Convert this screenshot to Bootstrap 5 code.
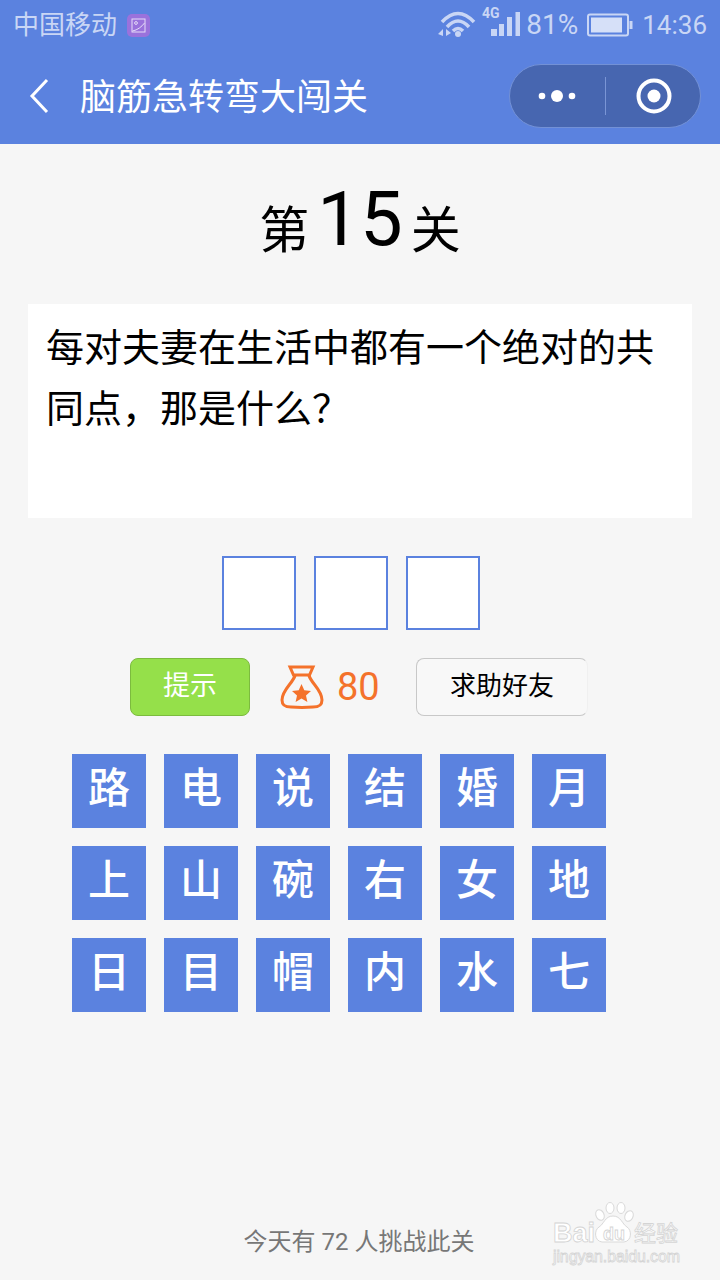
<!DOCTYPE html>
<html lang="zh-CN">
<head>
    <meta charset="UTF-8">
    <meta name="viewport" content="width=device-width, initial-scale=1.0">
    <title>脑筋急转弯大闯关</title>
    <link href="https://cdn.jsdelivr.net/npm/bootstrap@5.3.0/dist/css/bootstrap.min.css" rel="stylesheet">
    <style>
        html, body { height: 1280px; overflow: hidden; }
        body { background: #f6f6f6; font-family: Roboto, "Noto Sans CJK SC", sans-serif; color: #000; width: 720px; }
        .app-head { background: #5b82df; height: 144px; }
        .status-row { height: 48px; padding: 2px 13px 0 13px; color: #c9d6f5; font-size: 26px; line-height: 46px; }
        .sim-badge { width: 23px; height: 23px; background: #9a72dc; border-radius: 5px; margin-left: 10px; }
        .batt-pct { font-size: 28px; margin-left: 5px; }
        .gap-5 { margin-left: 5px; }
        .gap-9 { margin-left: 9px; }
        .nav-row { height: 96px; padding: 0 19px 0 29px; }
        .nav-title { color: #fff; font-size: 36px; margin-left: 24px; line-height: 1; padding-top: 4px; }
        .capsule { width: 192px; height: 64px; border-radius: 32px; background: #4766b0; border: 1px solid #7391d6; }
        .capsule-part { width: 95px; }
        .capsule-part-right { padding-left: 3px; }
        .capsule-line { width: 1px; height: 38px; background: #7a95d5; }
        .level-title { height: 160px; padding-top: 29px; font-size: 50px; }
        .level-num { font-size: 76px; line-height: 92px; margin: 0 8px; }
        .level-word { line-height: 92px; padding-top: 12px; }
        .question-box { width: 664px; height: 214px; margin-left: 28px; background: #fff; padding: 14px 18px; font-size: 38px; line-height: 61px; }
        .answer-row { margin: 38px 0 0 222px; gap: 18px; }
        .answer-cell { width: 74px; height: 74px; border: 2px solid #5b82df; background: #fff; }
        .tool-row { margin-top: 28px; margin-left: 130px; height: 58px; }
        .hint-btn { width: 120px; height: 58px; background: #95e04a; border: 1px solid #7cbb3e; border-radius: 8px; color: #fff; font-size: 27px; padding: 0 0 1px; }
        .hint-btn:hover { background: #95e04a; color: #fff; border-color: #7cbb3e; }
        .coin-wrap { width: 166px; padding-left: 30px; color: #f4722b; font-size: 38px; gap: 13px; }
        .help-btn { width: 172px; height: 58px; background: #f8f8f8; border: 1px solid #c8c8c8; border-right-color: #f0f0f0; border-radius: 8px; color: #000; font-size: 26px; padding: 0 0 2px; }
        .letter-grid { margin: 38px 0 0 72px; display: grid; grid-template-columns: repeat(6, 74px); gap: 18px; }
        .letter-cell { height: 74px; background: #5b82df; color: #fff; font-size: 42px; font-weight: 500; line-height: 1; padding-bottom: 4px; }
        .foot-text { position: absolute; left: 0; right: 2px; top: 1224px; text-align: center; color: #777; font-size: 24px; line-height: 36px; }
        .mark-logo { position: absolute; left: 550px; top: 1200px; }
        .mark-logo text { fill: #fff; stroke: #d4d4d4; stroke-width: .8px; }
        .mark-brand { font-family: "Liberation Sans", sans-serif; font-weight: 700; font-size: 27px; }
        .mark-du { font-family: "Liberation Sans", sans-serif; font-weight: 700; font-size: 18px; }
        .mark-jy { font-size: 22px; }
        .mark-url { font-family: "Liberation Sans", sans-serif; font-size: 16px; }
    </style>
</head>
<body class="position-relative">
    <header class="app-head">
        <div class="status-row d-flex align-items-center">
            <span>中国移动</span>
            <span class="sim-badge d-flex align-items-center justify-content-center">
                <svg width="15" height="15" viewBox="0 0 15 15" fill="none" stroke="#e6dcf8" stroke-width="1"><rect x="1" y="1" width="13" height="13"/><circle cx="5" cy="5" r="1.4"/><path d="M1.5 13c5-1 9-4 12-8"/></svg>
            </span>
            <span class="ms-auto d-flex align-items-center">
                <svg width="38" height="28" viewBox="0 0 38 28" fill="none" stroke="#c9d6f5" stroke-width="3.500">
                    <path d="M4 11Q20 -6 36 11"/><path d="M9 16Q20 4 31 16"/><path d="M15 20Q20 15 25 20"/>
                    <circle cx="20" cy="23" r="3" fill="#c9d6f5" stroke="none"/>
                    <path d="M5 18l-5 5 5 2zM8 18l5 4-5 3z" fill="#c9d6f5" stroke="none"/>
                </svg>
                <svg class="gap-5" width="40" height="44" viewBox="0 -4 40 44">
                    <text x="1" y="11" font-family="Roboto, sans-serif" font-size="14" font-weight="700" fill="#c9d6f5">4G</text>
                    <rect x="10" y="22" width="6" height="7" fill="#c9d6f5"/><rect x="18" y="17" width="5" height="12" fill="#c9d6f5"/><rect x="26" y="10" width="5" height="19" fill="#c9d6f5"/><rect x="34.500" y="5" width="4.500" height="24" fill="#c9d6f5"/>
                </svg>
                <span class="batt-pct">81%</span>
                <svg class="gap-9" width="46" height="24" viewBox="0 0 46 24">
                    <rect x="1" y="1.500" width="40" height="21" rx="2" fill="none" stroke="#c9d6f5" stroke-width="2"/>
                    <rect x="4" y="4.500" width="31" height="15" fill="#d6e0f8"/><rect x="42.500" y="8" width="3" height="8" fill="#c9d6f5"/>
                </svg>
                <span class="gap-9">14:36</span>
            </span>
        </div>
        <div class="nav-row d-flex align-items-center">
            <svg width="27" height="36" viewBox="0 0 27 36" fill="none" stroke="#fff" stroke-width="3"><path d="M18 2L3 18l15 16"/></svg>
            <span class="nav-title">脑筋急转弯大闯关</span>
            <div class="capsule d-flex align-items-center ms-auto">
                <span class="capsule-part d-flex align-items-center justify-content-center">
                    <svg width="38" height="14" viewBox="0 0 38 14" fill="#fff"><circle cx="4" cy="7" r="3.300"/><circle cx="19" cy="7" r="6"/><circle cx="34" cy="7" r="3.300"/></svg>
                </span>
                <span class="capsule-line"></span>
                <span class="capsule-part capsule-part-right d-flex align-items-center justify-content-center">
                    <svg width="36" height="36" viewBox="0 0 36 36"><circle cx="18" cy="18" r="15.500" fill="none" stroke="#fff" stroke-width="4"/><circle cx="18" cy="18" r="6.500" fill="#fff"/></svg>
                </span>
            </div>
        </div>
    </header>

    <main>
        <div class="level-title d-flex justify-content-center align-items-start">
            <span class="level-word">第</span>
            <span class="level-num">15</span>
            <span class="level-word">关</span>
        </div>
        <div class="question-box">每对夫妻在生活中都有一个绝对的共同点，那是什么？</div>
        <div class="answer-row d-flex">
            <div class="answer-cell"></div>
            <div class="answer-cell"></div>
            <div class="answer-cell"></div>
        </div>
        <div class="tool-row d-flex align-items-center">
            <button type="button" class="btn hint-btn">提示</button>
            <div class="coin-wrap d-flex align-items-center">
                <svg width="44" height="44" viewBox="0 0 44 44" fill="none" stroke="#f4722b" stroke-width="3">
                    <path d="M10 2h23l-3.500 8h-16z"/>
                    <path d="M15 10.500C13 18 2 25 2 35c0 6 4 7 9 7 7 .5 15 .5 22 0 5 0 9-1 9-7 0-10-11-17-13-24.500"/>
                    <path d="M21.500 19l2.800 6.200 6.700.7-5 4.500 1.400 6.600-5.900-3.400-5.900 3.400 1.400-6.600-5-4.500 6.700-.7z" fill="#f4722b" stroke="none"/>
                </svg>
                <span>80</span>
            </div>
            <button type="button" class="btn help-btn">求助好友</button>
        </div>
        <div class="letter-grid" id="letterGrid"></div>
    </main>

    <div class="foot-text">今天有 72 人挑战此关</div>
    <svg class="mark-logo" width="134" height="68" viewBox="0 0 134 68">
        <g fill="#fff" stroke="#d9d9d9" stroke-width="1">
            <ellipse cx="50" cy="15" rx="4" ry="5.500" transform="rotate(-25 50 15)"/>
            <ellipse cx="60" cy="8" rx="4" ry="5.500"/>
            <ellipse cx="71" cy="8" rx="4" ry="5.500"/>
            <ellipse cx="79" cy="16" rx="4" ry="5.500" transform="rotate(25 79 16)"/>
            <path d="M63 16c8 0 9 8 14 11 5 3 5 14-3 15H52c-8-1-8-12-3-15 5-3 6-11 14-11z"/>
        </g>
        <text class="mark-brand" x="3" y="41.500">Bai</text>
        <text class="mark-du" x="53" y="40">du</text>
        <text class="mark-jy" x="84" y="41">经验</text>
        <text class="mark-url" x="3" y="62" textLength="127">jingyan.baidu.com</text>
    </svg>

    <script>
        const letters = '路电说结婚月上山碗右女地日目帽内水七';
        const grid = document.getElementById('letterGrid');
        for (const ch of letters) {
            const cell = document.createElement('div');
            cell.className = 'letter-cell d-flex align-items-center justify-content-center';
            cell.textContent = ch;
            grid.appendChild(cell);
        }
    </script>
    <script src="https://cdn.jsdelivr.net/npm/bootstrap@5.3.0/dist/js/bootstrap.bundle.min.js"></script>
</body>
</html>
